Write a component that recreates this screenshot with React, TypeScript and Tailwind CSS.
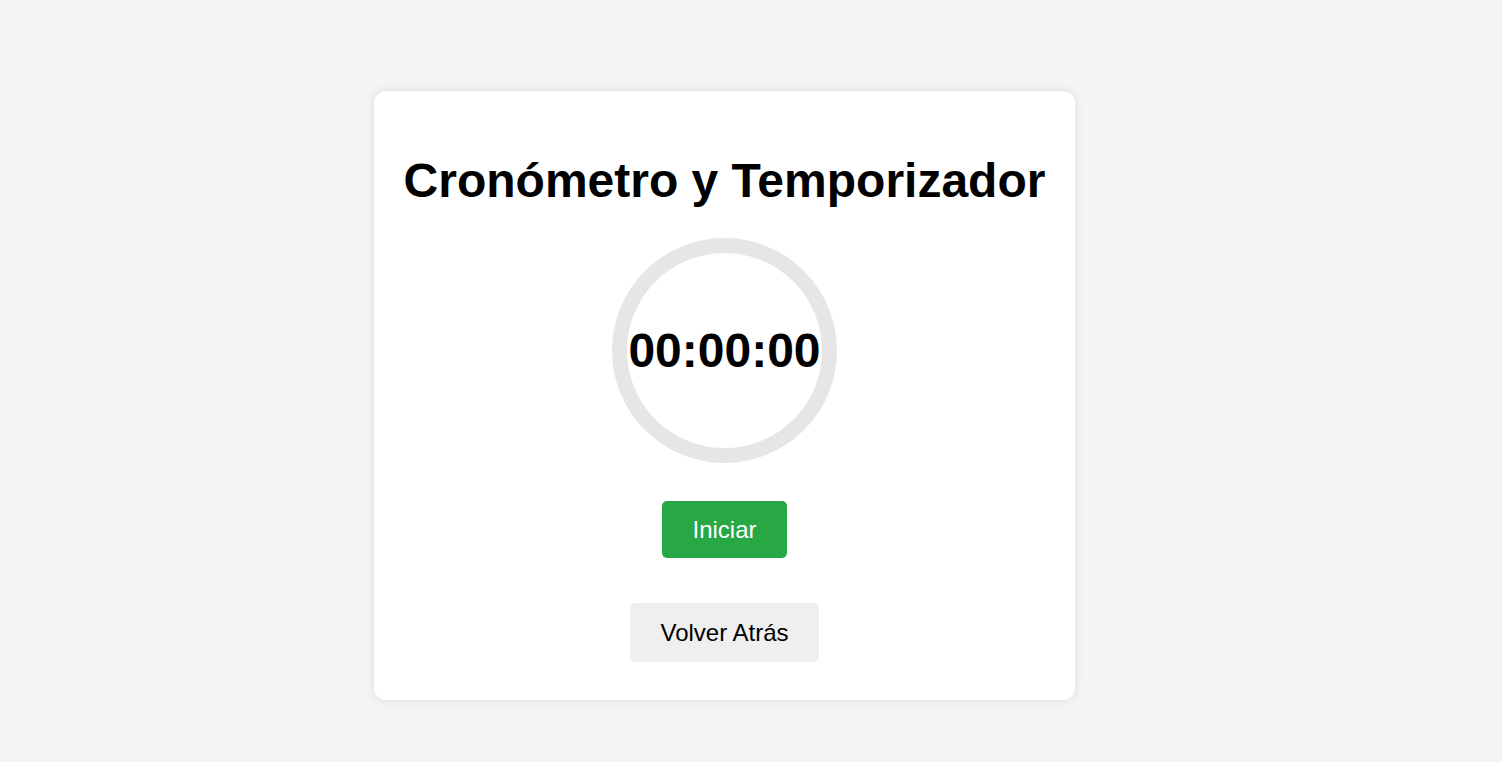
export default function App() {
  return (
    <div
      className="min-h-[762px] w-full bg-[#f4f4f4] pt-[91px] pl-[374px]"
      style={{ fontFamily: '"Liberation Sans", Arial, sans-serif' }}
    >
      <div className="flex w-[701px] flex-col items-center rounded-[12px] bg-white pt-[62px] pb-[38px] shadow-[0_0_10px_rgba(0,0,0,0.1)]">
        <h1 className="text-[48px] font-bold leading-[55px] text-black">
          Cronómetro y Temporizador
        </h1>
        <div className="mt-[30px] flex h-[225px] w-[225px] items-center justify-center rounded-full border-[15px] border-[#e6e6e6] box-border">
          <span className="text-[48px] font-bold leading-[55px] text-black whitespace-nowrap">
            00:00:00
          </span>
        </div>
        <button className="mt-[38px] h-[57px] rounded-[5px] bg-[#28a745] px-[30px] text-[24px] leading-[27px] text-white">
          Iniciar
        </button>
        <button className="mt-[45px] h-[59px] w-[189px] rounded-[5px] bg-[#efefef] text-[24px] leading-[27px] text-black">
          Volver Atrás
        </button>
      </div>
    </div>
  );
}
